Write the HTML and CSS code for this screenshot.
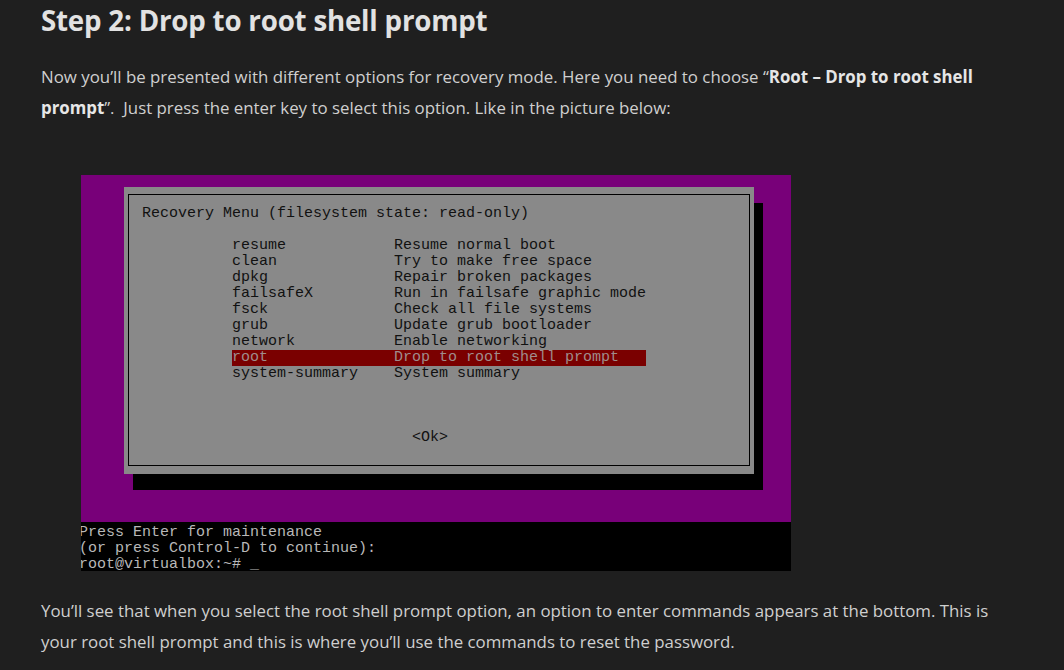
FILE: index.html
```html
<!DOCTYPE html>
<html lang="en">
<head>
<meta charset="utf-8">
<title>Step 2: Drop to root shell prompt</title>
<link rel="stylesheet" href="styles.css">
</head>
<body>
<article class="article">
  <h2 class="step-title">Step 2: Drop to root shell prompt</h2>
  <p class="para para-intro">Now you’ll be presented with different options for recovery mode. Here you need to choose “<strong>Root – Drop to root shell prompt</strong>”.&nbsp; Just press the enter key to select this option. Like in the picture below:</p>
  <figure class="shot">
    <div class="purple">
      <div class="dialog">
        <div class="dialog-inner">
          <div class="term-line title-line">Recovery Menu (filesystem state: read-only)</div>
          <div class="term-line"></div>
          <div class="menu">
            <div class="row"><span class="cmd">resume</span><span class="desc">Resume normal boot</span></div>
            <div class="row"><span class="cmd">clean</span><span class="desc">Try to make free space</span></div>
            <div class="row"><span class="cmd">dpkg</span><span class="desc">Repair broken packages</span></div>
            <div class="row"><span class="cmd">failsafeX</span><span class="desc">Run in failsafe graphic mode</span></div>
            <div class="row"><span class="cmd">fsck</span><span class="desc">Check all file systems</span></div>
            <div class="row"><span class="cmd">grub</span><span class="desc">Update grub bootloader</span></div>
            <div class="row"><span class="cmd">network</span><span class="desc">Enable networking</span></div>
            <div class="row row-selected"><span class="cmd">root</span><span class="desc">Drop to root shell prompt</span></div>
            <div class="row"><span class="cmd">system-summary</span><span class="desc">System summary</span></div>
          </div>
          <div class="ok-line">&lt;Ok&gt;</div>
        </div>
      </div>
    </div>
    <div class="console">
      <div class="console-line">Press Enter for maintenance</div>
      <div class="console-line">(or press Control-D to continue):</div>
      <div class="console-line">root@virtualbox:~# _</div>
    </div>
  </figure>
  <p class="para para-after">You’ll see that when you select the root shell prompt option, an option to enter commands appears at the bottom. This is your root shell prompt and this is where you’ll use the commands to reset the password.</p>
</article>
</body>
</html>
```
FILE: styles.css
```css
html, body {
  margin: 0;
  padding: 0;
  background: #1f1f1f;
}

body {
  font-family: "Open Sans", "Noto Sans", sans-serif;
  color: #cfcfcf;
}

.article {
  padding-left: 41px;
  width: 975px;
}

.step-title {
  margin: 0;
  font-size: 27.7px;
  line-height: 40px;
  font-weight: 700;
  color: #e2e2e2;
  letter-spacing: -0.2px;
}

.para {
  margin: 0;
  font-size: 16.85px;
  line-height: 31px;
}

.para strong {
  font-weight: 700;
  color: #e6e6e6;
}

.para-intro {
  margin-top: 21px;
}

.shot {
  margin: 52px 0 0 40px;
  width: 710px;
}

.purple {
  background: #780079;
  height: 347px;
  padding: 12px 0 0 43px;
  box-sizing: border-box;
}

.dialog {
  width: 630px;
  height: 287px;
  box-sizing: border-box;
  background: #898989;
  padding: 7px 4px 8px 4px;
  box-shadow: 9px 16px 0 #000;
}

.dialog-inner {
  height: 100%;
  box-sizing: border-box;
  border: 1px solid #000;
  padding: 11px 0 0 13px;
  font-family: "Liberation Mono", "DejaVu Sans Mono", monospace;
  font-size: 15px;
  line-height: 16px;
  color: #111;
}

.term-line {
  height: 16px;
  white-space: pre;
}

.menu {
  margin-left: 90px;
  width: 414px;
}

.row {
  display: flex;
  height: 16px;
}

.cmd {
  width: 162px;
  flex: none;
  white-space: pre;
}

.desc {
  flex: 1;
  white-space: pre;
}

.row-selected {
  background: #7a0000;
  color: #a08c8c;
}

.ok-line {
  margin-top: 48px;
  margin-left: 270px;
  height: 16px;
  white-space: pre;
}

.console {
  background: #000;
  height: 49px;
  box-sizing: border-box;
  padding-top: 3px;
  overflow: hidden;
  font-family: "Liberation Mono", "DejaVu Sans Mono", monospace;
  font-size: 15px;
  line-height: 16px;
  color: #b8b8b8;
}

.console-line {
  margin-left: -2px;
  height: 16px;
  white-space: pre;
}

.para-after {
  margin-top: 24px;
}
```
